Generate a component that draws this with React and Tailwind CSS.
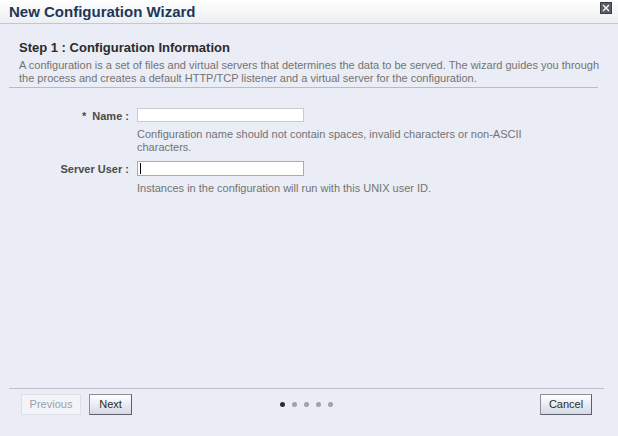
import React from "react";

function Dots() {
  return (
    <div className="flex items-center gap-[7px]">
      <span className="w-[5px] h-[5px] rounded-full bg-[#2c2c2c]"></span>
      <span className="w-[5px] h-[5px] rounded-full bg-[#a3a3a3]"></span>
      <span className="w-[5px] h-[5px] rounded-full bg-[#a3a3a3]"></span>
      <span className="w-[5px] h-[5px] rounded-full bg-[#a3a3a3]"></span>
      <span className="w-[5px] h-[5px] rounded-full bg-[#a3a3a3]"></span>
    </div>
  );
}

export default function App() {
  return (
    <div
      className="w-[618px] h-[436px] flex flex-col bg-[#eaedf5] overflow-hidden"
      style={{ fontFamily: "'Liberation Sans', Arial, sans-serif" }}
    >
      {/* title bar */}
      <div className="h-[24px] shrink-0 flex items-center justify-between pl-[9px] pr-[6px] bg-gradient-to-b from-[#ffffff] to-[#eceef2] border-b border-[#c4c7cd]">
        <span className="text-[15px] font-bold text-[#1f3656] leading-none">New Configuration Wizard</span>
        <button className="w-[12px] h-[12px] mb-[8px] flex items-center justify-center bg-[#5a5e66] border border-[#3c3f45]">
          <svg width="8" height="8" viewBox="0 0 8 8">
            <path d="M1 1 L7 7 M7 1 L1 7" stroke="#fff" strokeWidth="1.3" />
          </svg>
        </button>
      </div>

      {/* body */}
      <div className="flex-1 flex flex-col px-[19px] pt-[16px]">
        <h2 className="text-[13px] font-bold text-[#2b2b2b] leading-[16px]">Step 1 : Configuration Information</h2>
        <p className="text-[11px] text-[#737373] leading-[13px] mt-[3px] whitespace-nowrap">
          A configuration is a set of files and virtual servers that determines the data to be served. The wizard guides you through
          <br />
          the process and creates a default HTTP/TCP listener and a virtual server for the configuration.
        </p>
        <div className="h-px bg-[#b9bcc3] mt-[2px] ml-[-10px] mr-[1px]"></div>

        <div className="grid grid-cols-[110px_1fr] gap-x-[8px] mt-[20px] text-[11px]">
          <label className="text-right font-bold text-[#4b4b4b] leading-[14px] mt-[1px]">
            <span className="mr-[6px]">*</span>Name :
          </label>
          <div>
            <input className="w-[167px] h-[14px] bg-white border border-[#c8cbd1] outline-none block" />
            <p className="text-[#737373] leading-[13px] mt-[6px] whitespace-nowrap">
              Configuration name should not contain spaces, invalid characters or non-ASCII
              <br />
              characters.
            </p>
          </div>

          <label className="text-right font-bold text-[#4b4b4b] leading-[14px] mt-[8px]">Server User :</label>
          <div className="mt-[7px]">
            <div className="w-[167px] h-[15px] bg-white border border-[#a9acb2] flex items-center pl-[2px]">
              <span className="w-px h-[11px] bg-black"></span>
            </div>
            <p className="text-[#737373] leading-[13px] mt-[6px]">
              Instances in the configuration will run with this UNIX user ID.
            </p>
          </div>
        </div>
      </div>

      {/* footer */}
      <div className="shrink-0 h-[48px] ml-[9px] mr-[14px] border-t border-[#bec1c8] flex items-start pt-[5px]">
        <button className="ml-[12px] w-[60px] h-[21px] text-[11px] text-[#9aa0aa] bg-[#f2f4f8] border border-[#dcdfe5]">
          Previous
        </button>
        <button className="ml-[8px] w-[43px] h-[21px] text-[11px] text-[#2a2a2a] bg-gradient-to-b from-[#ffffff] to-[#d4d9e6] border border-[#8b8f97] border-b-[#5d6068] border-r-[#5d6068]">
          Next
        </button>
        <div className="ml-[148px] pt-[8px]">
          <Dots />
        </div>
        <div className="flex-1"></div>
        <button className="mr-[12px] w-[52px] h-[21px] text-[11px] text-[#2a2a2a] bg-gradient-to-b from-[#ffffff] to-[#d4d9e6] border border-[#8b8f97] border-b-[#5d6068] border-r-[#5d6068]">
          Cancel
        </button>
      </div>
    </div>
  );
}
